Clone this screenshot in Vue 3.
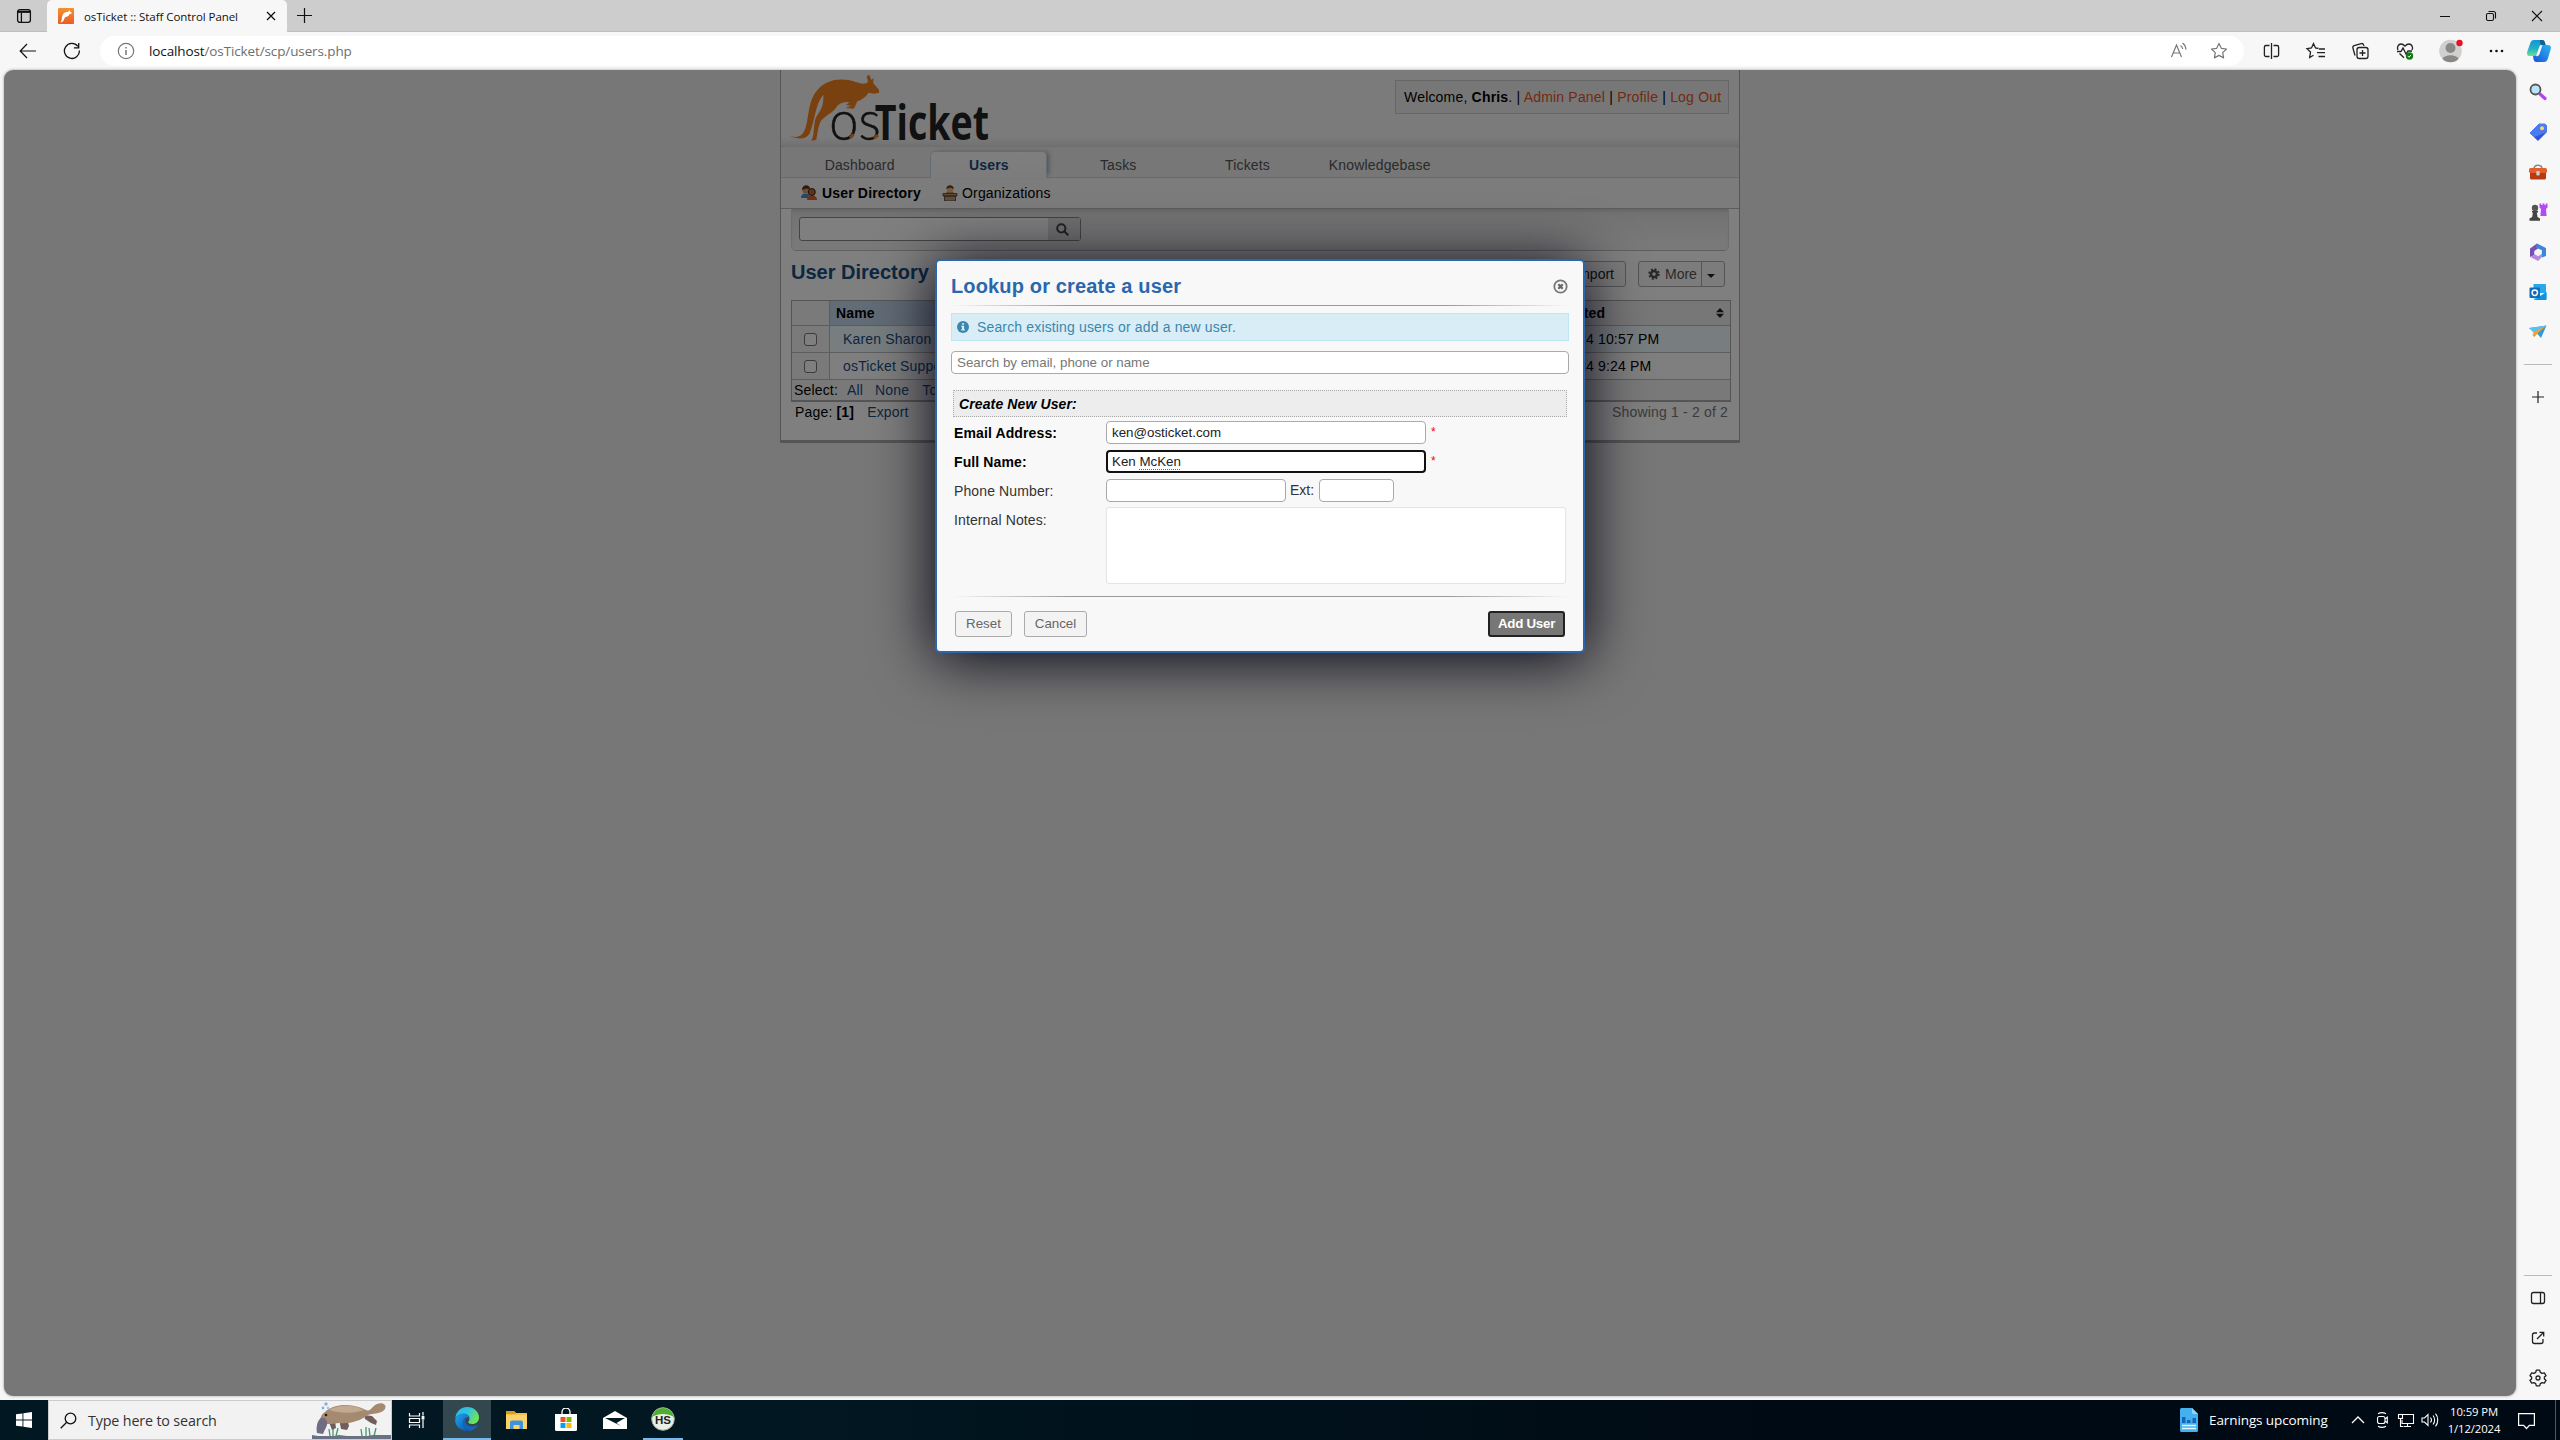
<script setup>
const tabs = ['Dashboard', 'Users', 'Tasks', 'Tickets', 'Knowledgebase']
const rows = [
  { name: 'Karen Sharon', updated: '1/12/24 10:57 PM' },
  { name: 'osTicket Support', updated: '1/12/24 9:24 PM' },
]
</script>

<template>
  <div class="screen">
    <header class="titlebar">
      <div class="workspace">
        <svg width="16" height="16" viewBox="0 0 16 16" fill="none" stroke="#111" stroke-width="1.3"><rect x="1.6" y="1.6" width="12.8" height="12.8" rx="2.4" /><path d="M1.6 3.8h12.8" stroke-width="2.2" /><path d="M5.400 5v9" /></svg>
      </div>
      <div class="tab">
        <svg width="16" height="16" viewBox="0 0 16 16"><defs><linearGradient id="fav" x1="0" y1="0" x2="0" y2="1"><stop offset="0" stop-color="#f3922f" /><stop offset="1" stop-color="#ea5b27" /></linearGradient></defs><rect width="16" height="16" rx="1" fill="url(#fav)" /><path d="M2 14.2c2-.4 1.6-3 2-5.2C4.5 5.5 7 3.6 10 4l1.500-2 .7 1.800 2 1.200-2.700 1.200C10.500 8 9 8.500 7.500 9c-1.500 1-1.200 3.500-3 4.800-.8.5-1.700.6-2.500.4z" fill="#fff" /></svg>
        <span class="tab-title">osTicket :: Staff Control Panel</span>
        <svg width="10" height="10" viewBox="0 0 10 10" stroke="#111" stroke-width="1.3"><path d="M1 1l8 8M9 1L1 9" /></svg>
      </div>
      <svg class="newtab" width="15" height="15" viewBox="0 0 15 15" stroke="#111" stroke-width="1.2"><path d="M7.500 0v15M0 7.500h15" /></svg>
      <div class="winctl">
        <svg width="46" height="32" viewBox="0 0 46 32" stroke="#111" fill="none"><path d="M18 16.500h10" /></svg>
        <svg width="46" height="32" viewBox="0 0 46 32" stroke="#111" fill="none" stroke-width="1.1"><rect x="18.500" y="13.500" width="7" height="7" rx="1.500" /><path d="M20.500 11.500h5a2 2 0 0 1 2 2v5" /></svg>
        <svg width="46" height="32" viewBox="0 0 46 32" stroke="#111" fill="none" stroke-width="1.1"><path d="M18 11l10 10M28 11L18 21" /></svg>
      </div>
    </header>

    <div class="toolbar">
      <svg class="back" width="18" height="16" viewBox="0 0 18 16" fill="none" stroke="#111" stroke-width="1.2"><path d="M17 8H1.500M8 1L1.200 8 8 15" /></svg>
      <svg class="reload" width="18" height="18" viewBox="0 0 18 18" fill="none" stroke="#111" stroke-width="1.3"><path d="M16.400 8.500A7.500 7.500 0 1 1 14.800 4.300M15.700 1v4.800h-4.800" /></svg>
      <div class="address">
        <svg width="18" height="18" viewBox="0 0 18 18" fill="none" stroke="#777" stroke-width="1.2"><circle cx="9" cy="9" r="7.700" /><path d="M9 8v5M9 5v1.500" stroke-width="1.5" /></svg>
        <span class="url"><b>localhost</b>/osTicket/scp/users.php</span>
        <svg class="read" width="18" height="18" viewBox="0 0 18 18" fill="none" stroke="#777" stroke-width="1.2"><path d="M1.500 15L6.500 3l5 12M3.300 11h6.500M10.500 3.500c1.300.8 2 2 2.200 3.500M12.500 1c2 1.300 3.200 3.500 3.500 6.500" /></svg>
        <svg class="star" width="18" height="18" viewBox="0 0 18 18" fill="none" stroke="#777" stroke-width="1.2" stroke-linejoin="round"><path d="M9 1.500l2.300 4.800 5.200.7-3.800 3.600.9 5.300L9 13.400l-4.600 2.500.9-5.300L1.500 7l5.200-.7z" /></svg>
      </div>
      <div class="actions">
        <svg width="45" height="24" viewBox="-22.5 -12 45 24"><path d="M-2-5.500h-3.500a1.600 1.600 0 0 0-1.600 1.600v7.800a1.600 1.600 0 0 0 1.600 1.600H-2M2-5.500h3.500a1.600 1.600 0 0 1 1.600 1.600v7.800a1.600 1.600 0 0 1-1.600 1.600H2M0-8V8" /></svg>
        <svg width="45" height="24" viewBox="-22.5 -12 45 24"><path d="M2-2.500L-1-3-3-7.500-5-3l-4.500.7L-6 1l-.8 5.500L-3 4.300M2.500-2h6M.500 1.700h8M2 5.500h6.500" /></svg>
        <svg width="45" height="24" viewBox="-21.5 -12 45 24"><rect x="-3.500" y="-3.500" width="11" height="11" rx="2.2" /><path d="M2-1v6M-1 2h6M-5.500 4.500L-7.600-3a2 2 0 0 1 1.300-2.400l7-2a2 2 0 0 1 2.400 1.300l.3 1" /></svg>
        <svg width="45" height="24" viewBox="-21 -12 45 24"><path d="M-7-1C-8.500-4 -6.500-7-4-7-2-7-1-6 0-4.800 1-6 2-7 4-7c2.500 0 4.500 3 3 6M-8 .5h4l2-3.500 3 6 2-3h4M-5.500 2.500L-1 6.800" /><circle cx="4.500" cy="5" r="3.700" fill="#107c10" stroke="none" /><path d="M3 5.200l1 1 2-2.300" stroke="#fff" stroke-width="1" /></svg>
        <svg width="45" height="24" viewBox="-21.5 -12 45 24"><g stroke="none"><circle r="11.300" fill="#d2d0ce" /><circle cy="-3" r="5" fill="#8a8886" /><path d="M-8 8a8.500 5.500 0 0 1 16 0 11.300 11.300 0 0 1-16 0z" fill="#8a8886" /><circle cx="9" cy="-8" r="3.200" fill="#e81123" /></g></svg>
        <svg width="45" height="24" viewBox="-22.5 -12 45 24"><g stroke="none" fill="#111"><circle cx="-5.500" r="1.300" /><circle cx="0" r="1.300" /><circle cx="5.500" r="1.300" /></g></svg>
      </div>
      <svg class="copilot" width="24" height="22" viewBox="0 0 24 22"><defs><linearGradient id="c1" x1="0" y1="0" x2="0" y2="1"><stop offset="0" stop-color="#1596d8" /><stop offset=".55" stop-color="#23b1c4" /><stop offset="1" stop-color="#6ddf95" /></linearGradient><linearGradient id="c2" x1="1" y1="0" x2="0" y2="1"><stop offset="0" stop-color="#2ab8f5" /><stop offset="1" stop-color="#1b50d8" /></linearGradient></defs><path d="M7 0h8c2 0 2.500 1 3 3l.6 2H15c-2 0-2.500 1-3 3l-1.600 5c-.6 2-1.400 3-3.500 3H3c-3 0-3.500-2-2.500-5L3.300 3C4 1 5 0 7 0z" fill="url(#c1)" /><path d="M17 22H9.500c-2 0-2.500-1-3-3L6 16c3 0 4-1 4.500-3L12 8c.6-2 1.300-3 3.500-3H21c3 0 3.500 2 2.500 5l-2.800 9c-.7 2-1.700 3-3.700 3z" fill="url(#c2)" /><path d="M12 8c.5-2 1.500-3 3.500-3L12.500 14c-.6 1.500-1.500 2.200-3.500 2.200z" fill="#f7f7f7" /><path d="M15 0c2 0 2.500 1 3 3l.6 2h-3C13.500 5 12.500 3 13 0z" fill="#14618f" /></svg>
    </div>

    <div class="body">
      <main class="viewport">
        <div class="container">
          <div class="head">
            <svg class="logo" width="200" height="72" viewBox="60 30 600 216">
              <path fill="#f58220" d="M60 228C85 236 98 228 106 205 118 170 112 125 142 90 165 62 200 54 235 60 258 64 272 74 288 70L294 66 290 48 298 44 304 60 310 54 310 70 326 88 328 98 312 101 296 98C286 112 274 120 262 124L252 146 226 144 244 137 228 136 238 126C222 126 206 128 196 146 184 160 158 172 152 184 144 202 142 222 139 239L124 243C134 226 130 190 138 172 150 152 162 140 160 104 136 130 134 186 118 222 106 242 76 236 60 228Z" />
              <text x="178" y="240" font-family="Lato" font-weight="300" font-size="168" textLength="154" lengthAdjust="spacingAndGlyphs" fill="#222" stroke="#222" stroke-width="1.5">os</text>
              <path d="M237 230l10-10 7 6-10 11zM309 232l10-10 8 7-12 9z" fill="#f58220" />
              <text x="314" y="240" font-family="Open Sans" font-weight="700" font-size="147" textLength="343" lengthAdjust="spacingAndGlyphs" fill="#222">Ticket</text>
            </svg>
            <p class="welcome">Welcome, <strong>Chris</strong>. | <a>Admin Panel</a> | <a>Profile</a> | <a>Log Out</a></p>
          </div>
          <nav class="nav">
            <div v-for="t in tabs" :key="t" class="cell" :class="{ wide: t === 'Knowledgebase' }">
              <div class="navtab" :class="{ active: t === 'Users' }">{{ t }}</div>
            </div>
          </nav>
          <div class="subnav">
            <svg width="16" height="16" viewBox="0 0 16 16"><path d="M0 13c0-3 1.500-4.500 4.500-4.500S9 10 9 13z" fill="#4a90c4" /><circle cx="5" cy="5" r="3.600" fill="#d9a066" /><path d="M1 5c0-6 8-6 8-1L5 3.500z" fill="#5a3418" /><path d="M6 15c0-3 1.500-4.500 5-4.500s5 1.500 5 4.500z" fill="#e2622c" /><circle cx="10.800" cy="7" r="3.500" fill="#b06a3c" stroke="#402010" /></svg>
            <span class="dir">User Directory</span>
            <svg width="16" height="16" viewBox="0 0 16 16"><path d="M4 9c0-2 1-3 4-3s4 1 4 3z" fill="#e08a3c" /><circle cx="8" cy="4" r="3.300" fill="#e9b98a" /><path d="M4.300 4c0-5 7.500-5 7.500 0L8 2.500z" fill="#6b3c1a" /><path d="M1 8.500h14v2.500H1zM2.500 11h11v5h-11z" fill="#b79f86" stroke="#5b4636" stroke-width=".9" /></svg>
            <span class="org">Organizations</span>
          </div>
          <div class="searchbar">
            <div class="searchbox">
              <div class="field"></div>
              <div class="go"><svg width="13" height="13" viewBox="0 0 13 13" fill="none" stroke="#444" stroke-width="2"><circle cx="5.300" cy="5.300" r="4.100" /><path d="M8.300 8.300l4 4" /></svg></div>
            </div>
          </div>
          <div class="pagehead">
            <h2>User Directory</h2>
            <div class="btn import">Import</div>
            <div class="btn more">
              <div class="more-l"><svg width="12" height="12" viewBox="-6 -6 12 12" fill="none" stroke="#555"><circle r="3" stroke-width="2.6" /><circle r="4.700" stroke-width="2" stroke-dasharray="1.9 1.79" /></svg><span>More</span></div>
              <div class="more-r"><i class="caret"></i></div>
            </div>
          </div>
          <div class="table">
            <div class="tr th"><div class="c0"></div><div class="c1">Name</div><div class="c2"><span>Updated</span><svg width="8" height="10" viewBox="0 0 8 10"><path d="M4 0l4 4.200H0zM4 10l4-4.200H0z" fill="#222" /></svg></div></div>
            <div v-for="(r, i) in rows" :key="r.name" class="tr" :class="{ odd: i === 0 }">
              <div class="c0"><i class="check"></i></div><div class="c1">{{ r.name }}</div><div class="c2">{{ r.updated }}</div>
            </div>
            <div class="tf"><span>Select:</span><a class="all">All</a><a class="none">None</a><a>Toggle</a></div>
          </div>
          <div class="pager"><span>Page: <b>[1]</b></span><a>Export</a><span class="showing">Showing 1 - 2 of 2</span></div>
        </div>

        <div class="overlay"></div>

        <section class="dialog">
          <div class="dhead">
            <h3>Lookup or create a user</h3>
            <svg width="15" height="15" viewBox="0 0 15 15" fill="none" stroke="#777"><circle cx="7.500" cy="7.500" r="6.200" stroke-width="1.8" /><path d="M5.300 5.300l4.400 4.400M9.700 5.300L5.300 9.700" stroke-width="2.3" stroke="#666" /></svg>
          </div>
          <div class="rule"></div>
          <div class="notice">
            <svg width="12" height="12" viewBox="0 0 12 12"><circle cx="6" cy="6" r="6" fill="#3a87ad" /><path d="M4.300 4.700h2.800v3.500h.8v1.300H4.200V8.200H5V6h-.7zM5 2.200h2.100v1.600H5z" fill="#d9edf7" /></svg>
            <span>Search existing users or add a new user.</span>
          </div>
          <div class="input lookup">Search by email, phone or name</div>
          <div class="section"><em>Create New User:</em></div>
          <div class="row"><label class="req">Email Address:</label><div class="input full">ken@osticket.com</div><i class="ast">*</i></div>
          <div class="row"><label class="req">Full Name:</label><div class="input full focus">Ken <u>McKen</u></div><i class="ast">*</i></div>
          <div class="row"><label>Phone Number:</label><div class="input phone"></div><span class="ext">Ext:</span><div class="input extno"></div></div>
          <div class="row notes"><label>Internal Notes:</label><div class="textarea"></div></div>
          <div class="rule"></div>
          <div class="buttons">
            <div class="dbtn reset">Reset</div>
            <div class="dbtn cancel">Cancel</div>
            <div class="dbtn add">Add User</div>
          </div>
        </section>
      </main>

      <aside class="sidebar">
        <svg width="20" height="40" viewBox="-10 -20 20 40"><path d="M2.500 2.500l4.500 4" stroke="#b044f5" stroke-width="3.2" stroke-linecap="round" /><circle cx="-2.500" cy="-2.500" r="5" fill="#b9e4fb" stroke="#555" stroke-width="1.8" /></svg>
        <svg width="20" height="40" viewBox="-10 -20 20 40"><path d="M1-8h6l1.500 1.500V0L0 8.500-8 1z" fill="#4a7bf0" stroke="#4a7bf0" stroke-linejoin="round" /><path d="M8.500 0L0 8.500-3.500 5z" fill="#3553d8" /><circle cx="4" cy="-3.800" r="2" fill="#ffd560" /></svg>
        <svg width="20" height="40" viewBox="-10 -20 20 40"><path d="M-4-3c0-5 8-5 8 0" fill="none" stroke="#888" stroke-width="1.6" /><rect x="-9" y="-4" width="18" height="5" rx="1.500" fill="#e3602c" /><path d="M-8 1H8v5a1.500 1.500 0 0 1-1.500 1.500h-13A1.500 1.500 0 0 1-8 6z" fill="#b83a12" /><rect x="-1.700" y="-1" width="3.400" height="4.500" rx="1" fill="#ccc" /></svg>
        <svg width="20" height="40" viewBox="-10 -20 20 40"><path d="M1.500-8.500h1.700v1.500h1.300v-1.500h2v1.500h1.300v-1.500h1.700v4L8-3l.6 7H2.400L3-3 1.500-4.500z" fill="#b14cf2" /><circle cx="-3" cy="-4" r="3.200" fill="#555" /><path d="M-6-1h6v1.500h-1.200L-.5 5 2 6.500v2.300H-8.500V6.500L-5.800 5l.7-4.500H-6z" fill="#444" /></svg>
        <svg width="20" height="40" viewBox="-10 -20 20 40"><path d="M-8-3.500L-1-8.500 2-4-3.500-1v4L-8 5z" fill="#7a50b8" /><path d="M-1-8.500L8-4V4L4 5.500V-1.500L-2-4.500z" fill="#3b88d8" /><path d="M-7.500 5L4-1v6L0 9z" fill="#b38be0" /><path d="M-3.500-1L0-3.500 3.700-1.500v3.500L0 4.200-3.500 2z" fill="#f7f7f7" /></svg>
        <svg width="20" height="40" viewBox="-10 -20 20 40"><path d="M-4.500-8H7a1 1 0 0 1 1 1v8H-4.500z" fill="#28a8ea" /><path d="M-4.500 0L2 4l6.500-4v7a1 1 0 0 1-1 1H-4z" fill="#50d9ff" /><path d="M-4 8L8.500 0v7a1 1 0 0 1-1 1z" fill="#1490df" /><rect x="-8.500" y="-4.500" width="10.500" height="10.500" rx="1" fill="#0f6cbd" /><circle cx="-3.200" cy=".7" r="2.700" fill="none" stroke="#fff" stroke-width="1.5" /></svg>
        <svg width="20" height="40" viewBox="-10 -20 20 40"><path d="M-9-4L8.500-6.500 3 6-1 1.500z" fill="#2b9be8" /><path d="M-9-4L8.500-6.500-4 1z" fill="#55c2f7" /><path d="M-5.500 3.500L-4 0 8.500-6.500-1 2-3.500 5z" fill="#f0a030" /></svg>
        <div class="div"></div>
        <svg width="12" height="12" viewBox="0 0 12 12" stroke="#222" stroke-width="1.2"><path d="M6 0v12M0 6h12" /></svg>
        <div class="spacer"></div>
        <div class="div low"></div>
        <svg width="20" height="40" viewBox="-10 -20 20 40" fill="none" stroke="#222" stroke-width="1.3"><rect x="-6.500" y="-5.500" width="13" height="11" rx="2" /><path d="M2.500-5.500v11" /></svg>
        <svg width="20" height="40" viewBox="-10 -20 20 40" fill="none" stroke="#222" stroke-width="1.3"><path d="M-1-5h-2.500a2 2 0 0 0-2 2v6.500a2 2 0 0 0 2 2H3a2 2 0 0 0 2-2V1M-1 1l6.500-6.500M1.500-5.700H5.700V-1.500" /></svg>
        <svg width="20" height="40" viewBox="-10 -20 20 40" fill="none" stroke="#222" stroke-width="1.3" stroke-linejoin="round"><path d="M-1.700-7.800h3.400l.6 2.200 1.800 1 2.200-.6 1.700 2.900L6.400-.9v1.800L8 2.300 6.300 5.200l-2.200-.6-1.800 1-.6 2.200h-3.400l-.6-2.200-1.800-1-2.200.6L-8 2.300-6.400.9V-.9L-8-2.300l1.700-2.900 2.200.6 1.800-1z" /><circle r="2" /></svg>
      </aside>
    </div>

    <footer class="taskbar">
      <div class="start"><svg width="16" height="16" viewBox="0 0 16 16" fill="#fff"><path d="M0 2.300l6.500-.9v6.200H0zM7.400 1.200L16 0v7.600H7.400zM0 8.400h6.500v6.200L0 13.700zM7.400 8.400H16V16l-8.600-1.200z" /></svg></div>
      <div class="tsearch">
        <svg width="17" height="17" viewBox="0 0 17 17" fill="none" stroke="#111" stroke-width="1.3"><circle cx="10.500" cy="6.500" r="5.300" /><path d="M6.700 10.300L.7 16.300" /></svg>
        <span>Type here to search</span>
        <svg class="platypus" width="79" height="38" viewBox="0 0 79 38"><g fill="none" stroke="#3f9a68" stroke-width="1.3"><path d="M18 35l-1-7M21 35v-10M24 35l2-8M50 35l-1-7M54 35v-9M58 35l-1-8M62 35l2-8" /></g><path d="M0 34l6 1h16l5-1 8 1h20l6-1h18v4H0z" fill="#6a7183" /><path d="M27 18l8-1 2 8-2 4-6-1zM52 14l8 1 5 5-1 4-5-2-6-4zM17 21l6-1 1 7-4 2z" fill="#6e5f5a" /><path d="M13 11C22 2 40 2 54 9c5 2 6-4 11-6 6-2 10 1 8 5-3 5-11 4-17 6-8 6-18 9-29 8-6 1-10 1-14 1L9 22c-2-5 1-9 4-11z" fill="#a58a72" /><path d="M17 9c11-6 24-5 35 0-8 3-22 4-35 0z" fill="#c2aa91" /><path d="M9 17c4-1 7 3 6 7-1 3-3 6-4 9l-6-1c-1-6 0-12 4-15z" fill="#6f6c84" /><circle cx="14" cy="14" r="1.300" fill="#221d20" /><circle cx="14" cy="3" r="1.700" fill="#7fb2e8" /><circle cx="11" cy="7" r="1.400" fill="#7fb2e8" /><circle cx="16" cy="7" r="1.100" fill="#7fb2e8" /></svg>
      </div>
      <div class="titem"><svg width="18" height="18" viewBox="0 0 18 18" fill="none" stroke="#fff" stroke-width="1.2"><path d="M1.500 2v3h10V2M1.500 17v-3h10v3M1.500 7.500h10v4h-10zM15 1v3.500M15 9v8" /><rect x="14.200" y="5.500" width="1.600" height="2.500" fill="#fff" /></svg></div>
      <div class="titem on"><svg width="24" height="24" viewBox="0 0 24 24"><defs><linearGradient id="e1" x1="0" y1="0" x2="1" y2=".5"><stop offset="0" stop-color="#2bb8e8" /><stop offset=".5" stop-color="#2fc2df" /><stop offset="1" stop-color="#6fe35a" /></linearGradient><linearGradient id="e2" x1="0" y1="0" x2="1" y2="1"><stop offset="0" stop-color="#1da4ee" /><stop offset="1" stop-color="#0c4ea8" /></linearGradient></defs><path d="M.3 11C1 4.500 6 0 12.200 0 19 0 24 5 24 10.500c0 4-3 6.500-6.500 6.500-3 0-4.300-1-4.300-2 0-.6 1.300-1.200 1.300-3.200C14.500 9 12 7 8.500 7 4.500 7 1.500 9 .3 11z" fill="url(#e1)" /><path d="M.2 12.500C.8 9 4.500 6.500 8.500 6.500c3.500 0 6 2 6 4.500-3-1.500-6.500.5-6.500 4.500 0 4.500 4 7 8 8.200-1.300.3-2.500.3-4 .3C5 24-.3 18.500.2 12.500z" fill="url(#e2)" /><path d="M8 15.500c0-2.500 1.500-4.300 3.600-4.700-.8.8-1.300 2-1.300 3.200 0 4 4.700 6 8.700 5.300 1.500-.3 2.700-1 3.300-.7.4.4-2.300 4-6.300 5.100-4-.7-8-3.700-8-8.200z" fill="#1464ba" /></svg></div>
      <div class="titem"><svg width="22" height="20" viewBox="0 0 22 20"><path d="M0 1h8l2 2h11v16H0z" fill="#f5c04a" /><path d="M0 1h8l1.500 1.500V4H0z" fill="#dd9a22" /><path d="M0 5h21v14H0z" fill="#fcd36b" /><path d="M4 19v-6.500a2 2 0 0 1 2-2h9a2 2 0 0 1 2 2V19h-3.500v-4h-6v4z" fill="#3f92dc" /></svg></div>
      <div class="titem"><svg width="22" height="24" viewBox="0 0 22 24"><path d="M7 7V4a4 4 0 0 1 8 0v3" fill="none" stroke="#fff" stroke-width="1.3" /><path d="M0 6h22v15.500a1.500 1.500 0 0 1-1.500 1.500h-19A1.500 1.500 0 0 1 0 21.500z" fill="#fff" /><path d="M5.500 9h5v5h-5z" fill="#f25022" /><path d="M11.500 9h5v5h-5z" fill="#7fba00" /><path d="M5.500 15h5v5h-5z" fill="#00a4ef" /><path d="M11.500 15h5v5h-5z" fill="#ffb900" /></svg></div>
      <div class="titem"><svg width="24" height="20" viewBox="0 0 24 20"><path d="M0 8L12 1l12 7v11H0z" fill="#fff" /><path d="M2 8h20l-8.500 5 4.500 3z" fill="#011822" /></svg></div>
      <div class="titem hs"><svg width="24" height="24" viewBox="0 0 24 24"><circle cx="12" cy="12" r="11.300" fill="#e9efe6" stroke="#9fae9c" /><path d="M1 10a11.200 11.200 0 0 1 22 0c-6-4-16-4-22 0z" fill="#4fae2c" /><text x="12" y="16.500" text-anchor="middle" font-family="Liberation Sans" font-weight="700" font-size="11.5" fill="#222">HS</text></svg></div>
      <div class="tray">
        <svg width="18" height="24" viewBox="0 0 18 24"><path d="M1.500 0H12l6 6v16.500a1.500 1.500 0 0 1-1.500 1.500h-15A1.500 1.500 0 0 1 0 22.500v-21A1.500 1.500 0 0 1 1.500 0z" fill="#45b0f0" /><path d="M12 0l6 6h-4.500A1.500 1.500 0 0 1 12 4.500z" fill="#8fd6ff" /><path d="M2 9h3.500v6H2zM7 12h3.500v3H7zM12.500 10H16v5h-3.500z" fill="#1566b8" /><path d="M2 17.500h14M2 20.500h14" stroke="#e6f6ff" stroke-width="1.5" /></svg>
        <span class="earn">Earnings upcoming</span>
        <svg class="up" width="14" height="8" viewBox="0 0 14 8" fill="none" stroke="#fff" stroke-width="1.3"><path d="M1 7l6-6 6 6" /></svg>
        <svg width="24" height="18" viewBox="-12 -9 24 18" fill="none" stroke="#fff" stroke-width="1.1"><rect x="-4.500" y="-3.500" width="7.500" height="7" rx="2" /><path d="M3-1l2.300-1.800v5.600L3 1M-4-6.200c2.500-1.500 5.500-1.500 8 0M-4 6.200c2.500 1.500 5.500 1.500 8 0" /></svg>
        <svg width="24" height="18" viewBox="-12 -9 24 18" fill="none" stroke="#fff" stroke-width="1.1"><path d="M-3-5.500H7.500v9H-4V0M1.500 3.500V6.500M-2 6.500h7" /><rect x="-7.500" y="-5.500" width="4" height="4" /><path d="M-5.500-1.500v8h3" /></svg>
        <svg width="24" height="18" viewBox="-12 -9 24 18" fill="none" stroke="#fff" stroke-width="1.1"><path d="M-8-2h2.500L-2-5.500v11L-5.500 2H-8zM.5-2.500c1.200 1.500 1.200 3.500 0 5M3-4.500c2.200 2.500 2.200 6.500 0 9M5.500-6.300c3 3.500 3 9 0 12.600" /></svg>
        <div class="clock"><span>10:59 PM</span><span>1/12/2024</span></div>
        <svg class="note" width="17" height="17" viewBox="0 0 17 17" fill="none" stroke="#fff" stroke-width="1.2"><path d="M.6.600h15.800v11.800h-5L8.500 15.500 5.600 12.400H.6z" /></svg>
        <div class="desk"></div>
      </div>
    </footer>
  </div>
</template>

<style>
body { background: #f7f7f7; overflow: hidden; }
</style>

<style scoped>
.screen { width: 2560px; height: 1440px; display: flex; flex-direction: column; background: #f7f7f7; font-family: "Liberation Sans", Arial, sans-serif; overflow: hidden; }
.screen *, .screen *::before { box-sizing: border-box; }
svg { display: block; flex: none; }
span, a, em, b, label, .input { white-space: nowrap; }
h2, h3, p { margin: 0; }

.titlebar { height: 32px; background: #cdcdcd; border-bottom: 1px solid #bdbdbd; display: flex; align-items: center; font-family: "Open Sans", sans-serif; }
.workspace { width: 47px; padding-left: 16px; }
.tab { width: 240px; height: 32px; background: #f7f7f7; border-radius: 5px 5px 0 0; display: flex; align-items: center; padding-left: 11px; z-index: 1; align-self: flex-start; }
.tab-title { font-size: 11.5px; letter-spacing: -0.06px; color: #111; margin-left: 10px; width: 182px; }
.newtab { margin-left: 10px; }
.winctl { margin-left: auto; display: flex; }

.toolbar { height: 38px; display: flex; align-items: center; background: #f7f7f7; }
.back { margin-left: 19px; }
.reload { margin-left: 26px; }
.address { margin-left: 19px; width: 2144px; height: 30px; margin-bottom: 1px; border-radius: 15px; background: #fff; display: flex; align-items: center; padding-left: 17px; font-family: "Open Sans", sans-serif; }
.url { font-size: 13.5px; letter-spacing: -0.12px; color: #6e6e6e; margin: 1px 0 0 14px; }
.url b { font-weight: 400; color: #111; }
.read { margin-left: auto; margin-right: 22px; }
.star { margin-right: 16px; }
.actions { display: flex; margin-left: 4.5px; fill: none; stroke: #222; stroke-width: 1.3; }
.copilot { margin-left: 8px; }

.body { height: 1330px; display: flex; }
.viewport { margin-left: 4px; width: 2512px; height: 1326px; border-radius: 9px; background: #eee; position: relative; overflow: hidden; box-shadow: 0 0 3px #999; }
.overlay { position: absolute; inset: 0; background: rgba(0, 0, 0, 0.5); }

.container { margin-left: 776px; width: 960px; height: 373px; background: #fefefe; border: 1px solid #aaa; border-top: 0; border-bottom: 3px solid #aaa; font-size: 14px; letter-spacing: 0.17px; color: #000; }
.head { height: 77px; display: flex; background: linear-gradient(#f7f7f7 88%, #e2e2e2); border-bottom: 1px solid #ddd; }
.logo { margin-left: 9px; overflow: visible; letter-spacing: 0; }
.welcome { margin: 10px 10px 0 auto; width: 334px; height: 34px; border: 1px solid #ccc; background: #eee; padding-left: 8px; line-height: 33px; white-space: nowrap; letter-spacing: 0.19px; }
.welcome a { color: #e65524; }
.nav { height: 31px; display: flex; padding: 4px 0 0 14px; background: #eee; border-bottom: 1px solid #c5d9ec; }
.cell { width: 129.3px; display: flex; justify-content: center; }
.cell.wide { width: 135px; }
.navtab { width: 117px; height: 27px; line-height: 29px; text-align: center; color: #555; }
.navtab.active { background: linear-gradient(#fefefe, #f8f8f8); border: 1px solid #c5d9ec; border-bottom: 0; border-radius: 5px 5px 0 0; color: #184e81; font-weight: 700; line-height: 27px; box-shadow: 4px -1px 4px -2px #aaa; }
.subnav { height: 31px; display: flex; align-items: center; padding: 0 0 1px 20px; background: #f8f8f8; border-bottom: 1px solid #bbb; }
.dir { font-weight: 700; margin-left: 5px; width: 120px; }
.org { margin-left: 4px; }
.searchbar { margin: 0 10px; height: 42px; padding: 8px 7px; background: linear-gradient(#e4e4e4, #f2f2f2 80%); border: solid #ddd; border-width: 0 1px; border-bottom: 1px dotted #999; border-radius: 0 0 5px 5px; box-shadow: inset 0 4px 4px -3px #bbb; }
.searchbox { width: 282px; height: 24px; border: 1px solid #888; border-radius: 3px; display: flex; background: #fff; }
.field { width: 248px; }
.go { flex: 1; background: #e0e0e0; display: flex; align-items: center; justify-content: center; padding-right: 3px; }
.pagehead { height: 49px; margin: 0 14px 0 10px; display: flex; padding-top: 10px; }
h2 { font-size: 20px; line-height: 25px; margin-top: -1px; letter-spacing: 0; color: #184e81; margin-right: auto; }
.btn { height: 26px; border: 1px solid #aaa; border-radius: 3px; background: #f9f9f9; line-height: 24px; letter-spacing: 0; }
.import { width: 90px; text-align: right; padding-right: 11px; margin-right: 12px; color: #222; }
.more { width: 87px; display: flex; color: #555; }
.more-l { width: 63px; border-right: 1px solid #aaa; display: flex; align-items: center; gap: 5px; padding-left: 9px; }
.more-r { flex: 1; display: flex; justify-content: center; align-items: center; padding: 4px 4px 0 0; }
.caret { border: 4px solid transparent; border-top-color: #222; border-bottom: 0; }
.table { margin-left: 10px; width: 940px; height: 102px; border: 1px solid #aaa; border-bottom-width: 2px; background: #f2f2f2; }
.tr { height: 27px; display: flex; border-bottom: 1px solid #bbb; background: #fff; line-height: 27px; }
.tr.th { height: 25px; font-weight: 700; background: #eee; line-height: 25px; }
.tr.odd { background: #f0faff; }
.c0 { width: 38px; border-right: 1px solid #bbb; background: #f4f4f4; display: flex; justify-content: center; align-items: center; padding-right: 1px; }
.c1 { width: 707px; padding-left: 13px; color: #184e81; }
.th .c1 { background: #c5d9ec; padding-left: 6px; color: #000; }
.c2 { flex: 1; padding-left: 9px; display: flex; align-items: center; }
.th .c2 { padding: 0 6px 0 11px; justify-content: space-between; }
.check { width: 13px; height: 13px; border: 1px solid #767676; border-radius: 3px; background: #fff; }
.tf { height: 21px; line-height: 21px; padding-left: 2px; display: flex; }
.tf a { color: #184e81; }
.all { margin: 0 12px 0 9px; }
.none { margin-right: 13px; }
.pager { display: flex; padding: 0 11px 0 14px; line-height: 20px; }
.pager a { color: #184e81; margin-left: 13px; }
.showing { margin-left: auto; color: #777; }

.dialog { position: absolute; left: 931px; top: 189px; width: 650px; height: 394px; border: 2px solid #2a67ac; border-radius: 5px; background: #f8f8f8; box-shadow: 0 5px 60px #001; font-size: 14px; letter-spacing: 0.12px; color: #000; padding: 0 14px; }
.dhead { height: 44px; display: flex; justify-content: space-between; align-items: center; padding: 6px 1px 0 0; letter-spacing: 0.15px; }
h3 { font-size: 20px; line-height: 25px; color: #2a67ac; }
.rule { height: 1px; background: linear-gradient(to right, transparent, #999 20%, #999 80%, transparent); }
.notice { height: 28px; margin-top: 7px; border: 1px solid #bce8f1; background: #d9edf7; color: #3a87ad; display: flex; align-items: center; gap: 8px; padding-left: 5px; letter-spacing: 0.15px; }
.input { height: 23px; border: 1px solid #aaa; border-radius: 4px; background: #fff; padding-left: 5px; font-size: 13.33px; line-height: 21px; letter-spacing: 0; color: #222; }
.lookup { margin-top: 10px; color: #777; }
.section { height: 27px; margin: 16px 2px 4px; border: 1px dotted #aaa; background: #ededed; padding-left: 5px; line-height: 26px; font-weight: 700; }
.row { height: 29px; padding-left: 3px; display: flex; }
.row label { flex: none; width: 152px; line-height: 24px; color: #333; }
.row label.req { font-weight: 700; color: #000; line-height: 24px; }
.full { width: 320px; }
.phone { width: 180px; }
.extno { width: 75px; }
.focus { border: 2px solid #111; padding-left: 4px; line-height: 19px; }
.focus u { text-decoration: underline dotted #e33; text-underline-offset: 3px; text-decoration-thickness: 1px; }
.ast { color: #f00; font-style: normal; font-size: 12px; margin: 4px 0 0 5px; }
.ext { width: 33px; padding-left: 4px; line-height: 22px; color: #333; letter-spacing: 0; }
.notes { height: 88px; }
.textarea { width: 460px; height: 77px; margin-top: -1px; border: 1px solid #e4e4e4; border-radius: 3px; background: #fff; }
.buttons { display: flex; margin-top: 14px; padding: 0 4px 0 4px; }
.dbtn { height: 26px; line-height: 24px; border: 1px solid #aaa; border-radius: 3px; text-align: center; color: #666; background: #f3f3f3; font-size: 13.33px; letter-spacing: 0; }
.reset { width: 57px; margin-right: 12px; }
.cancel { width: 63px; }
.add { width: 77px; margin-left: auto; background: #777; border: 2px solid #222; color: #fff; font-weight: 700; line-height: 22px; letter-spacing: -0.25px; }

.sidebar { flex: 1; display: flex; flex-direction: column; align-items: center; padding-top: 2px; }
.div { width: 28px; height: 1px; background: #bbb; margin: 12px 0 26px; }
.spacer { flex: 1; }
.div.low { margin: 0 0 2px; }
.sidebar > svg:last-child { margin-bottom: 2px; }

.taskbar { height: 40px; display: flex; color: #fff; font-family: "Open Sans", sans-serif; background: linear-gradient(to right, #011822, #011822 28%, #000a14 70%); }
.start { width: 48px; display: flex; align-items: center; justify-content: center; }
.tsearch { width: 344px; height: 40px; background: #f2f2f2; border: 1px solid #ccc; display: flex; align-items: center; padding-left: 11px; color: #333; font-size: 14.3px; letter-spacing: -0.15px; }
.tsearch span { margin-left: 11px; }
.platypus { margin-left: auto; align-self: flex-end; }
.titem { width: 49px; display: flex; align-items: center; justify-content: center; }
.titem.on { background: #33474f; width: 48px; margin: 0 1px 0 2px; border-bottom: 2px solid #76b9ed; }
.titem.hs { width: 40px; margin-left: 4px; border-bottom: 2px solid #76b9ed; }
.tray { margin-left: auto; display: flex; align-items: center; }
.earn { font-size: 13.5px; letter-spacing: -0.1px; margin-left: 11px; width: 142px; }
.up { margin-right: 5px; }
.clock { width: 64px; display: flex; flex-direction: column; align-items: center; font-size: 11.3px; letter-spacing: -0.1px; line-height: 17.5px; }
.note { margin: 2px 20px 0 12px; }
.desk { width: 1px; height: 40px; background: #556; margin-right: 4px; }
</style>
